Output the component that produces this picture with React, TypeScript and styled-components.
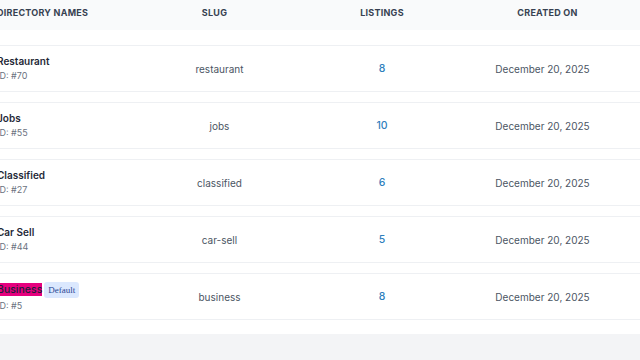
import React from 'react';
import styled, { createGlobalStyle } from 'styled-components';

interface DirectoryData {
  id: number;
  name: string;
  slug: string;
  listings: number;
  createdOn: string;
  isDefault?: boolean;
}

const directories: DirectoryData[] = [{
  id: 70,
  name: 'Restaurant',
  slug: 'restaurant',
  listings: 8,
  createdOn: 'December 20, 2025'
}, {
  id: 55,
  name: 'Jobs',
  slug: 'jobs',
  listings: 10,
  createdOn: 'December 20, 2025'
}, {
  id: 27,
  name: 'Classified',
  slug: 'classified',
  listings: 6,
  createdOn: 'December 20, 2025'
}, {
  id: 44,
  name: 'Car Sell',
  slug: 'car-sell',
  listings: 5,
  createdOn: 'December 20, 2025'
}, {
  id: 5,
  name: 'Business',
  slug: 'business',
  listings: 8,
  createdOn: 'December 20, 2025',
  isDefault: true
}];

const GlobalStyle = createGlobalStyle`
  body {
    margin: 0;
    background: #f3f4f6;
    font-family: Inter, "Liberation Sans", sans-serif;
    overflow: hidden;
  }
`;

const columns = '103px 239px 86px 235px';

const App = () => (
  <>
    <GlobalStyle />
    <Card>
      <HeaderRow>
        <HeaderCell>Directory Names</HeaderCell>
        <HeaderCell $align="center" $shift={-5}>Slug</HeaderCell>
        <HeaderCell $align="center">Listings</HeaderCell>
        <HeaderCell $align="center" $shift={5}>Created On</HeaderCell>
      </HeaderRow>
      <RowList>
        {directories.map(d => (
          <Row key={d.id}>
            <NameCell>
              <NameLine>
                {d.isDefault ? <Highlight>{d.name}</Highlight> : d.name}
                {d.isDefault && <DefaultBadge>Default</DefaultBadge>}
              </NameLine>
              <IdLine>ID: #{d.id}</IdLine>
            </NameCell>
            <TextCell>{d.slug}</TextCell>
            <CountCell>{d.listings}</CountCell>
            <TextCell>{d.createdOn}</TextCell>
          </Row>
        ))}
      </RowList>
    </Card>
  </>
);

const Card = styled.div`
  background: #ffffff;
  margin-left: -3px;
  width: calc(100% + 40px);
  padding-bottom: 14px;
`;

const HeaderRow = styled.div`
  display: grid;
  grid-template-columns: ${columns};
  align-items: center;
  height: 30px;
  padding-bottom: 6px;
  box-sizing: border-box;
  background: #f9fafb;
`;

const HeaderCell = styled.div<{ $align?: string; $shift?: number }>`
  text-align: ${p => p.$align || 'left'};
  font-size: 9px;
  font-weight: 700;
  color: #374151;
  text-transform: uppercase;
  letter-spacing: 0.25px;
  padding-left: ${p => (p.$shift && p.$shift > 0 ? p.$shift * 2 : 0)}px;
  padding-right: ${p => (p.$shift && p.$shift < 0 ? -p.$shift * 2 : 0)}px;
`;

const RowList = styled.div`
  display: flex;
  flex-direction: column;
  gap: 10px;
  margin-top: 15px;
`;

const Row = styled.div`
  display: grid;
  grid-template-columns: ${columns};
  align-items: center;
  height: 47px;
  box-sizing: border-box;
  border-top: 1px solid #eef0f3;
  border-bottom: 1px solid #eef0f3;
`;

const NameCell = styled.div`
  display: flex;
  flex-direction: column;
  gap: 2px;
`;

const NameLine = styled.div`
  display: flex;
  align-items: center;
  font-size: 10px;
  font-weight: 600;
  color: #1f2937;
  line-height: 13px;
  white-space: nowrap;
`;

const Highlight = styled.span`
  background: #e6007e;
  color: #1f1f3a;
  font-weight: 500;
  font-size: 10.5px;
`;

const DefaultBadge = styled.span`
  margin-left: 2px;
  padding: 1px 4px;
  border-radius: 3px;
  background: #dbe8fe;
  color: #2a4694;
  font-family: "Liberation Serif", serif;
  font-size: 9px;
  font-weight: 400;
  line-height: 14px;
`;

const IdLine = styled.div`
  font-size: 9px;
  color: #6b7280;
  line-height: 12px;
`;

const TextCell = styled.div`
  text-align: center;
  font-size: 10px;
  color: #4b5563;
`;

const CountCell = styled(TextCell)`
  color: #2f80bd;
  font-weight: 500;
  font-size: 10.5px;
`;

export default App;
